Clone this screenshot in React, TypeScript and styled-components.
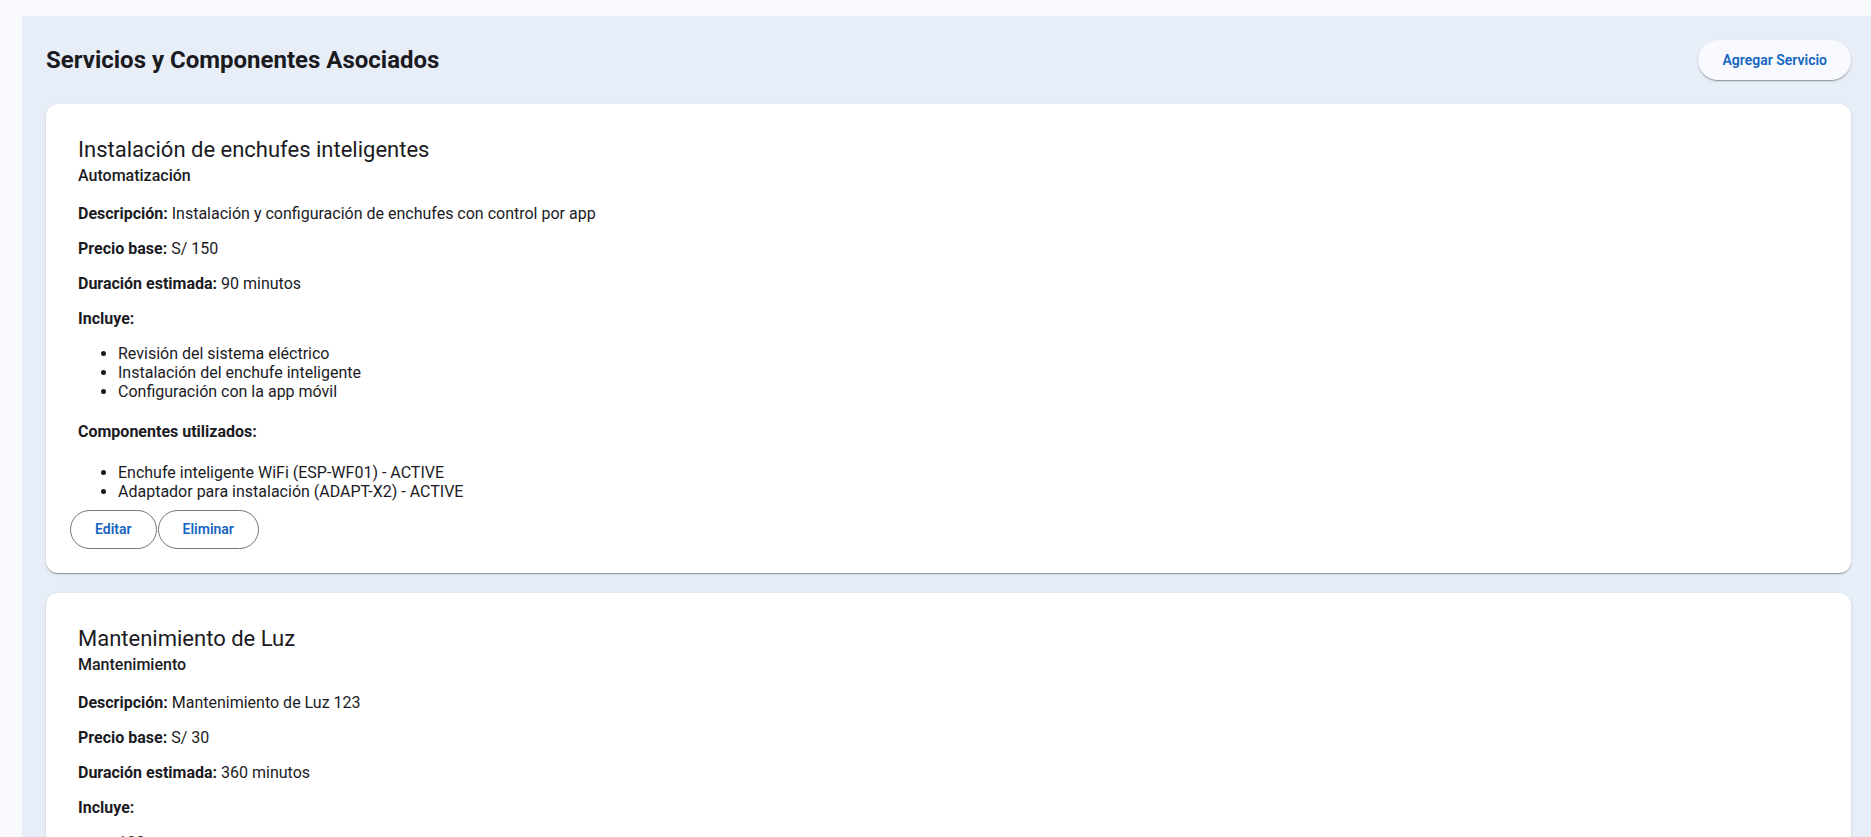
import { FunctionComponent } from "react";
import styled, { createGlobalStyle } from "styled-components";

const GlobalStyle = createGlobalStyle`
  html, body {
    margin: 0;
    background: #f8f9fd;
    font-family: Roboto, "Liberation Sans", Arial, sans-serif;
    color: #1b1b1f;
  }
`;

const Page = styled.div`
  padding: 16px 0 0 22px;
`;

const Panel = styled.main`
  background: #e7eef8;
  padding: 24px 20px 24px 24px;
  min-height: 800px;
`;

const Header = styled.header`
  display: flex;
  align-items: center;
  justify-content: space-between;
  height: 40px;
  margin-bottom: 24px;
`;

const PageTitle = styled.h2`
  margin: 0;
  font-size: 24px;
  line-height: 32px;
  font-weight: 700;
  color: #1b1b1f;
`;

const ElevatedButton = styled.button`
  height: 40px;
  padding: 0 24px;
  border: none;
  border-radius: 20px;
  background: #f8f9fe;
  color: #1565c0;
  font-family: inherit;
  font-size: 14px;
  font-weight: 600;
  cursor: pointer;
  box-shadow: 0px 2px 1px -1px rgba(0, 0, 0, 0.2),
    0px 1px 1px 0px rgba(0, 0, 0, 0.14), 0px 1px 3px 0px rgba(0, 0, 0, 0.12);
`;

const CardList = styled.div`
  display: flex;
  flex-direction: column;
  gap: 20px;
`;

const Card = styled.section`
  background: #fff;
  border-radius: 12px;
  padding: 16px;
  box-shadow: 0px 2px 1px -1px rgba(0, 0, 0, 0.2),
    0px 1px 1px 0px rgba(0, 0, 0, 0.14), 0px 1px 3px 0px rgba(0, 0, 0, 0.12);
`;

const CardContent = styled.div`
  padding: 16px 16px 0;
  font-size: 16px;
  & > :last-child {
    margin-bottom: 0;
  }
`;

const ServiceName = styled.h3`
  margin: 0;
  font-size: 22px;
  line-height: 28px;
  font-weight: 400;
`;

const Category = styled.div`
  font-size: 16px;
  line-height: 24px;
  font-weight: 500;
`;

const Field = styled.p`
  margin: 16px 0;
`;

const SectionHeading = styled.h4`
  margin: 1.33em 0;
  font-size: 16px;
  font-weight: 700;
`;

const List = styled.ul`
  margin: 16px 0;
  padding-left: 40px;
`;

const Actions = styled.div`
  display: flex;
  gap: 1px;
  padding: 9px 8px 8px;
`;

const OutlineButton = styled.button`
  height: 39px;
  padding: 0 24px;
  border: 1px solid #79747e;
  border-radius: 20px;
  background: transparent;
  color: #1565c0;
  font-family: inherit;
  font-size: 14px;
  font-weight: 600;
  cursor: pointer;
`;

interface Servicio {
  nombre: string;
  categoria: string;
  descripcion: string;
  precio: number;
  duracion: number;
  incluye: string[];
  componentes: string[];
}

const servicios: Servicio[] = [
  {
    nombre: "Instalación de enchufes inteligentes",
    categoria: "Automatización",
    descripcion: "Instalación y configuración de enchufes con control por app",
    precio: 150,
    duracion: 90,
    incluye: [
      "Revisión del sistema eléctrico",
      "Instalación del enchufe inteligente",
      "Configuración con la app móvil",
    ],
    componentes: [
      "Enchufe inteligente WiFi (ESP-WF01) - ACTIVE",
      "Adaptador para instalación (ADAPT-X2) - ACTIVE",
    ],
  },
  {
    nombre: "Mantenimiento de Luz",
    categoria: "Mantenimiento",
    descripcion: "Mantenimiento de Luz 123",
    precio: 30,
    duracion: 360,
    incluye: ["123"],
    componentes: [],
  },
];

const ServiceCard: FunctionComponent<{ servicio: Servicio }> = ({ servicio }) => (
  <Card>
    <CardContent>
      <ServiceName>{servicio.nombre}</ServiceName>
      <Category>{servicio.categoria}</Category>
      <Field>
        <strong>Descripción:</strong> {servicio.descripcion}
      </Field>
      <Field>
        <strong>Precio base:</strong> S/ {servicio.precio}
      </Field>
      <Field>
        <strong>Duración estimada:</strong> {servicio.duracion} minutos
      </Field>
      <Field>
        <strong>Incluye:</strong>
      </Field>
      <List>
        {servicio.incluye.map((item) => (
          <li key={item}>{item}</li>
        ))}
      </List>
      <SectionHeading>Componentes utilizados:</SectionHeading>
      <List>
        {servicio.componentes.map((item) => (
          <li key={item}>{item}</li>
        ))}
      </List>
    </CardContent>
    <Actions>
      <OutlineButton>Editar</OutlineButton>
      <OutlineButton>Eliminar</OutlineButton>
    </Actions>
  </Card>
);

const App: FunctionComponent = () => (
  <>
    <GlobalStyle />
    <Page>
      <Panel>
        <Header>
          <PageTitle>Servicios y Componentes Asociados</PageTitle>
          <ElevatedButton>Agregar Servicio</ElevatedButton>
        </Header>
        <CardList>
          {servicios.map((s) => (
            <ServiceCard key={s.nombre} servicio={s} />
          ))}
        </CardList>
      </Panel>
    </Page>
  </>
);

export default App;
